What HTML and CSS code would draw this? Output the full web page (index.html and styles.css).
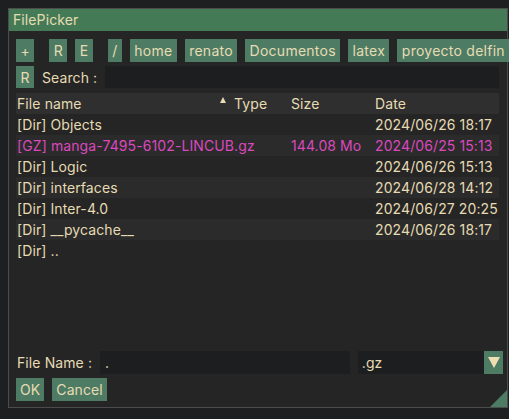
FILE: index.html
```html
<!DOCTYPE html>
<html>
<head>
<meta charset="utf-8">
<link rel="stylesheet" href="styles.css">
</head>
<body>
<div class="window">
  <div class="titlebar">FilePicker</div>
  <div class="content">
    <div class="toolbar">
      <span class="btn">+</span>
      <span class="sep"></span>
      <span class="btn">R</span>
      <span class="btn">E</span>
      <span class="sep"></span>
      <span class="btn">/</span>
      <span class="btn">home</span>
      <span class="btn">renato</span>
      <span class="btn">Documentos</span>
      <span class="btn">latex</span>
      <span class="btn">proyecto delfin</span>
    </div>
    <div class="searchrow">
      <span class="btn">R</span>
      <span class="label">Search :</span>
      <span class="input search"></span>
    </div>
    <div class="table">
      <div class="row head">
        <span class="c1">File name<span class="arrow"></span></span>
        <span class="c2">Type</span>
        <span class="c3">Size</span>
        <span class="c4">Date</span>
      </div>
      <div class="row">
        <span class="c1">[Dir] Objects</span><span class="c2"></span><span class="c3"></span><span class="c4">2024/06/26 18:17</span>
      </div>
      <div class="row alt gz">
        <span class="c1">[GZ] manga-7495-6102-LINCUB.gz</span><span class="c2"></span><span class="c3">144.08 Mo</span><span class="c4">2024/06/25 15:13</span>
      </div>
      <div class="row">
        <span class="c1">[Dir] Logic</span><span class="c2"></span><span class="c3"></span><span class="c4">2024/06/26 15:13</span>
      </div>
      <div class="row alt">
        <span class="c1">[Dir] interfaces</span><span class="c2"></span><span class="c3"></span><span class="c4">2024/06/28 14:12</span>
      </div>
      <div class="row">
        <span class="c1">[Dir] Inter-4.0</span><span class="c2"></span><span class="c3"></span><span class="c4">2024/06/27 20:25</span>
      </div>
      <div class="row alt">
        <span class="c1">[Dir] __pycache__</span><span class="c2"></span><span class="c3"></span><span class="c4">2024/06/26 18:17</span>
      </div>
      <div class="row">
        <span class="c1">[Dir] ..</span><span class="c2"></span><span class="c3"></span><span class="c4"></span>
      </div>
    </div>
    <div class="spacer"></div>
    <div class="filerow">
      <span class="label">File Name :</span>
      <span class="input fname">.</span>
      <span class="combo"><span class="combo-text">.gz</span><span class="combo-btn"><span class="tri"></span></span></span>
    </div>
    <div class="actions">
      <span class="btn">OK</span>
      <span class="btn">Cancel</span>
    </div>
  </div>
  <div class="grip"></div>
</div>
</body>
</html>
```

FILE: styles.css
```css
* { box-sizing: border-box; }
html, body {
  margin: 0;
  padding: 0;
  background: #1e1f21;
}
body {
  font-family: Inter, "Noto Sans", sans-serif;
  font-size: 14px;
  letter-spacing: 0.1px;
  color: #e6dbb3;
  width: 509px;
  height: 419px;
  overflow: hidden;
}
.window {
  position: relative;
  margin: 8px 0 0 8px;
  width: 500px;
  height: 400px;
  border: 1px solid #4c4c4c;
  background: #252525;
  display: flex;
  flex-direction: column;
}
.titlebar {
  height: 22px;
  background: #447b56;
  padding-left: 4px;
  line-height: 22px;
  font-size: 14px;
}
.content {
  flex: 1;
  display: flex;
  flex-direction: column;
  padding: 8px 4px 6px 7px;
}
.toolbar {
  display: flex;
  gap: 8px;
  height: 23px;
  align-items: stretch;
}
.btn {
  display: inline-flex;
  align-items: center;
  justify-content: center;
  background: #4e7b63;
  padding: 0 4.4px;
  height: 23px;
  line-height: 23px;
  white-space: nowrap;
  letter-spacing: 0.25px;
}
.actions .btn {
  padding: 0 4px;
  letter-spacing: 0.1px;
}
.sep {
  width: 1px;
  background: #4a4a4a;
  margin-right: -1px;
}
.searchrow {
  margin-top: 4px;
  display: flex;
  align-items: center;
  height: 22px;
}
.searchrow .btn {
  height: 22px;
  width: 18px;
}
.label {
  white-space: nowrap;
}
.searchrow .label {
  margin-left: 8px;
}
.input {
  background: #1c1e1f;
  height: 22px;
}
.search {
  flex: 1;
  margin-left: 8px;
  margin-right: 4px;
}
.table {
  margin-top: 5px;
  margin-right: 4px;
}
.row {
  display: flex;
  height: 21px;
  line-height: 21px;
  white-space: nowrap;
}
.row.head {
  background: #2f2f2f;
}
.row.alt {
  background: #2b2b2b;
}
.row.gz {
  color: #dc48bf;
}
.c1 {
  width: 218px;
  padding-left: 1px;
  position: relative;
}
.c2 { width: 57px; }
.c3 { width: 84px; }
.c4 { flex: 1; }
.arrow {
  position: absolute;
  left: 204px;
  top: 4px;
  width: 0;
  height: 0;
  border-left: 3.5px solid transparent;
  border-right: 3.5px solid transparent;
  border-bottom: 6px solid #e6dbb3;
}
.spacer { flex: 1; }
.filerow {
  display: flex;
  align-items: center;
  height: 23px;
}
.filerow .label {
  margin-left: 1px;
}
.fname {
  margin-left: 8px;
  width: 251px;
  height: 23px;
  padding-left: 5px;
  line-height: 23px;
}
.combo {
  margin-left: 8px;
  display: flex;
  width: 146px;
  height: 23px;
}
.combo-text {
  flex: 1;
  background: #1c1e1f;
  padding-left: 4px;
  line-height: 23px;
}
.combo-btn {
  width: 19px;
  background: #4e7b63;
  display: flex;
  align-items: center;
  justify-content: center;
}
.tri {
  width: 0;
  height: 0;
  border-left: 6px solid transparent;
  border-right: 6px solid transparent;
  border-top: 11px solid #eedfb3;
}
.actions {
  margin-top: 4px;
  display: flex;
  gap: 8px;
}
.grip {
  position: absolute;
  right: 0;
  bottom: 0;
  width: 0;
  height: 0;
  border-left: 17px solid transparent;
  border-bottom: 17px solid #4e7b63;
}
```
